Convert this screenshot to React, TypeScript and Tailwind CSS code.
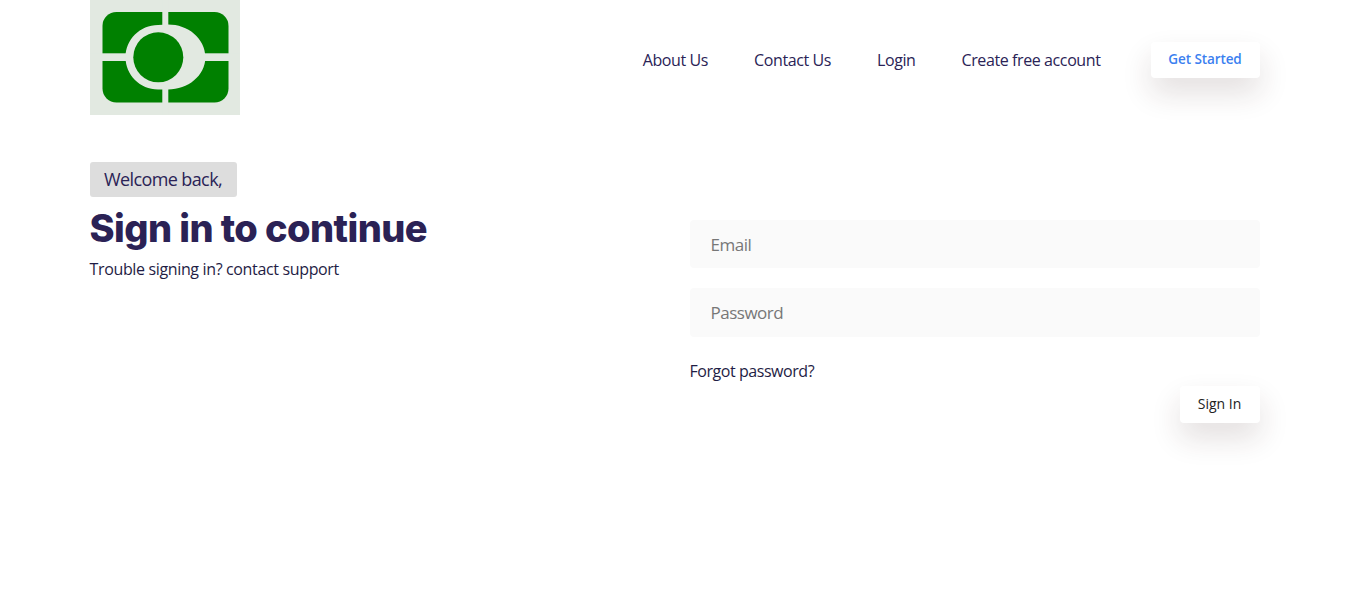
export default function App() {
  const navLinks = ["About Us", "Contact Us", "Login", "Create free account"];

  return (
    <div className="min-h-[600px] bg-white font-['Open_Sans',sans-serif] text-[#2a2356]">
      <div className="mx-auto w-[1170px]">
        {/* Header */}
        <header className="flex h-[115px] items-start justify-between">
          <svg viewBox="0 0 150 115" className="h-[115px] w-[150px] shrink-0">
            <rect width="150" height="115" fill="#e2e9e1" />
            <rect x="12.5" y="12" width="126" height="90.5" rx="14" fill="#008000" />
            <rect x="72.3" y="0" width="6" height="115" fill="#e2e9e1" />
            <rect x="0" y="53.3" width="150" height="7.7" fill="#e2e9e1" />
            <path d="M68 25 C50 25 35.500 39.500 35.500 57.300 C35.500 75 50 89.500 68 89.500 L78 89.500 C98 89.500 115 76 115.500 57.300 C115 38 98 24.500 78 24.500 Z" fill="#e2e9e1" />
            <circle cx="68.300" cy="57.300" r="25" fill="#008000" />
          </svg>
          <nav className="mt-[42px] flex items-start">
            <div className="mt-[6px] flex gap-[46px] text-[16px] leading-6 font-medium tracking-[-0.4px]">
              {navLinks.map((link) => (
                <a key={link} href="#">{link}</a>
              ))}
            </div>
            <button className="ml-[50px] h-9 w-[109px] rounded bg-white pb-[2px] text-[13.500px] font-semibold tracking-[-0.1px] text-[#3b7ff0] shadow-[0_15px_30px_rgba(60,30,30,0.14)]">
              Get Started
            </button>
          </nav>
        </header>

        {/* Sign in */}
        <main className="grid grid-cols-[600px_570px]">
          <section className="pt-[47px]">
            <div className="inline-flex h-[35px] w-[147px] items-center justify-center rounded-[3px] bg-[#dddddd] text-[18px] tracking-[-0.6px]">
              Welcome back,
            </div>
            <h1 className="mt-[7px] font-['Inter',sans-serif] text-[38px] leading-[48px] font-extrabold tracking-[-0.57px] text-[#2b2255]">
              Sign in to continue
            </h1>
            <p className="mt-[5px] text-[16px] leading-6 tracking-[-0.35px] text-[#1f1d45]">
              Trouble signing in? contact support
            </p>
          </section>

          <form className="flex flex-col pt-[105px]">
            <input
              placeholder="Email"
              className="h-12 rounded bg-[#fafafa] px-[21px] text-[17px] tracking-[-0.5px] placeholder:text-[#777777]"
            />
            <input
              placeholder="Password"
              className="mt-5 h-[49px] rounded bg-[#fafafa] px-[21px] text-[17px] tracking-[-0.5px] placeholder:text-[#777777]"
            />
            <a href="#" className="mt-[22px] text-[16px] leading-6 tracking-[-0.45px] text-[#1f1d45]">
              Forgot password?
            </a>
            <button
              type="button"
              className="mt-[3px] h-[37px] w-20 self-end rounded bg-white pb-[2px] text-[14px] font-medium text-[#222222] shadow-[0_15px_30px_rgba(60,30,30,0.14)]"
            >
              Sign In
            </button>
          </form>
        </main>
      </div>
    </div>
  );
}
